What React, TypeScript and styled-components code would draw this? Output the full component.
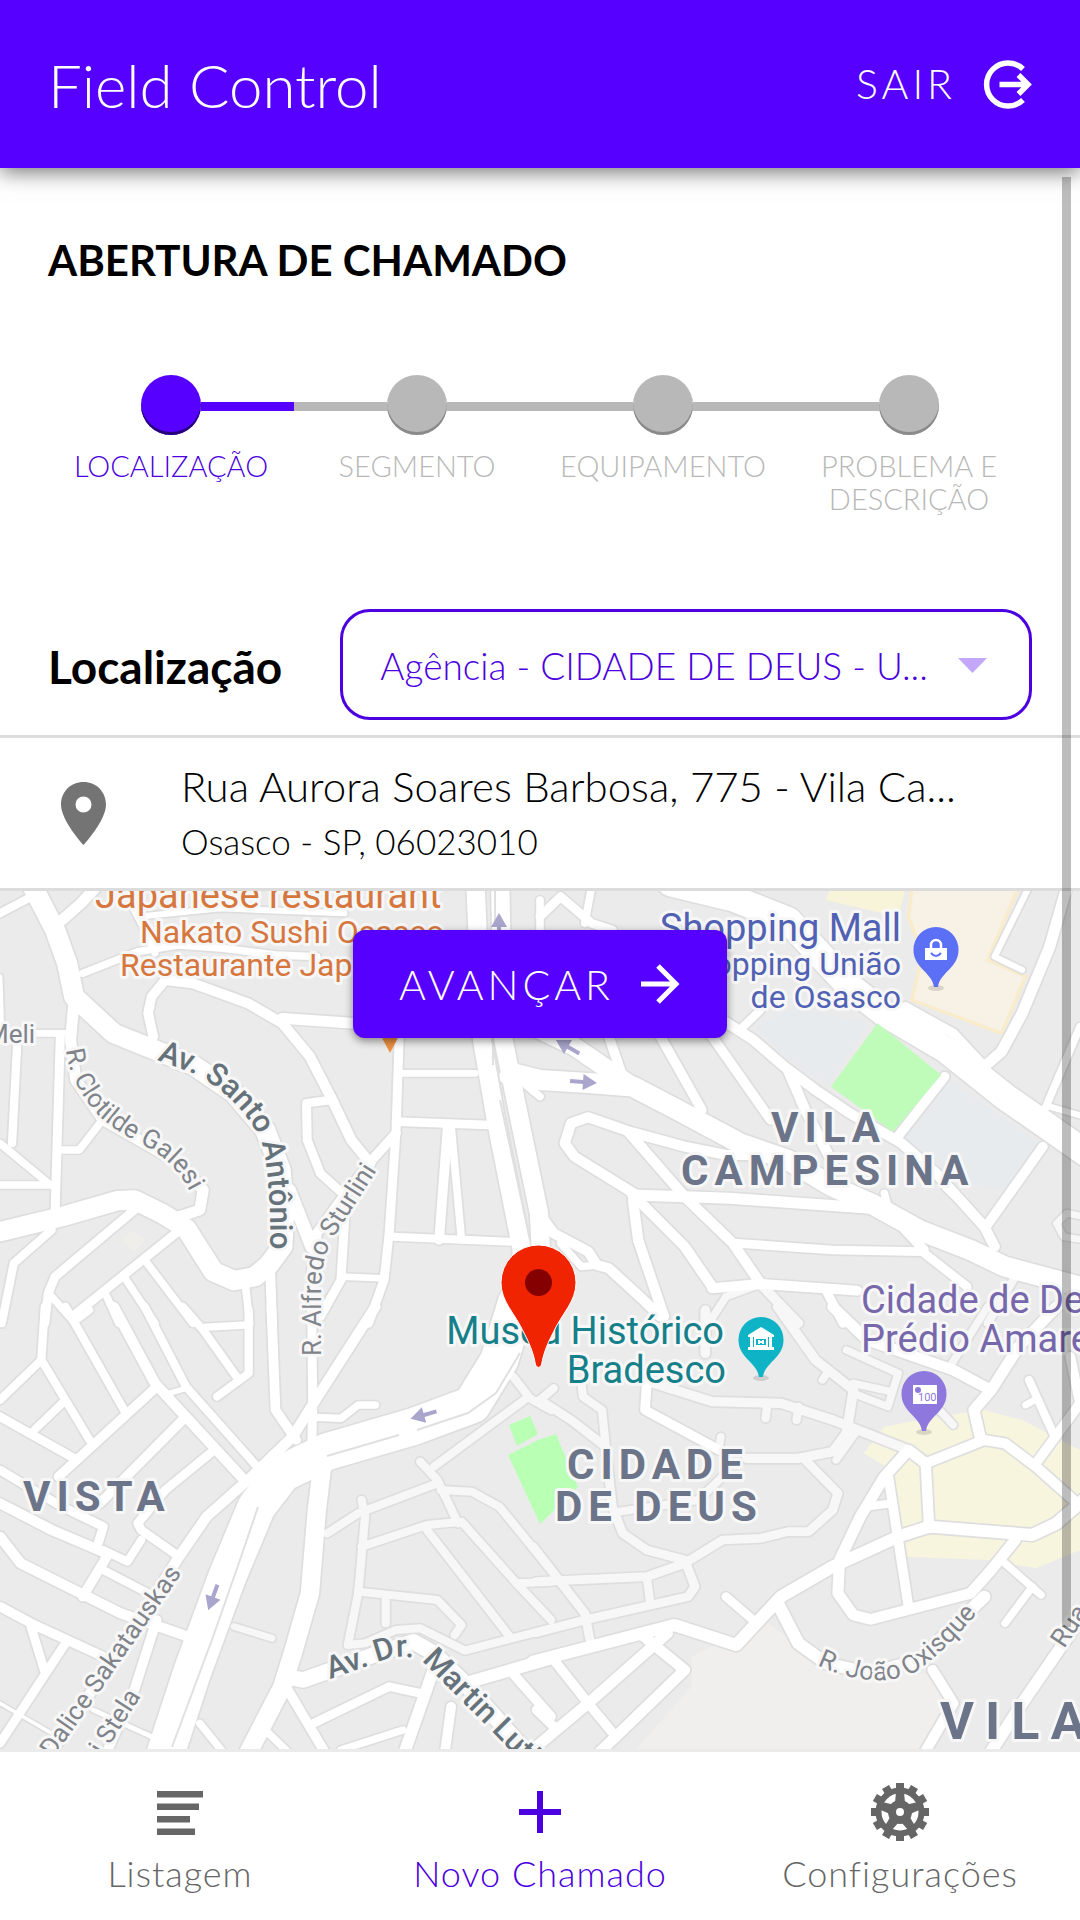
import React from "react";
import styled, { createGlobalStyle } from "styled-components";

const color = {
  primary: "#5600ff",
  primaryDark: "#4b00e0",
  idle: "#b8b8b8",
  grey: "#666666",
  line: "#dcdcdc",
};

const GlobalStyle = createGlobalStyle`
  *, *::before, *::after { box-sizing: border-box; }
  html, body { margin: 0; padding: 0; }
  body { background: #fff; color: #000; font-family: Lato, "Liberation Sans", sans-serif; font-weight: 300; }
`;

const Screen = styled.div`
  display: flex;
  flex-direction: column;
  min-height: 100vh;
  position: relative;
`;

const Header = styled.header`
  display: flex;
  align-items: center;
  justify-content: space-between;
  height: 168px;
  padding: 0 48px;
  background: ${color.primary};
  color: #fff;
  box-shadow: 0 4px 20px rgba(0, 0, 0, 0.55);
  z-index: 2;
`;

const AppTitle = styled.h1`
  margin: 0;
  padding-top: 2px;
  font-size: 60px;
  line-height: 72px;
  font-weight: 300;
`;

const LogoutButton = styled.button`
  display: flex;
  align-items: center;
  gap: 27px;
  padding: 0;
  border: 0;
  background: none;
  color: inherit;
  font: inherit;
  font-size: 41px;
  line-height: 48px;
  letter-spacing: 4px;
`;

const Form = styled.main`
  display: flex;
  flex-direction: column;
  flex: 1;
`;

const PageTitle = styled.h2`
  margin: 0;
  padding: 66px 48px 0;
  font-size: 42px;
  line-height: 52px;
  font-weight: 700;
`;

const Stepper = styled.ol`
  display: grid;
  grid-template-columns: repeat(4, minmax(0, 1fr));
  height: 234px;
  margin: 89px 48px 0;
  padding: 0;
  list-style: none;
`;

const Step = styled.li`
  display: flex;
  flex-direction: column;
  gap: 14px;
`;

const Track = styled.div`
  display: flex;
  align-items: center;
`;

const Bar = styled.span<{ $tone: string }>`
  flex: 1;
  height: 9px;
  margin-top: 3px;
  background: ${(p) => p.$tone};
`;

const Dot = styled.span<{ $active: boolean }>`
  width: 60px;
  height: 60px;
  border-radius: 50%;
  background: ${(p) => (p.$active ? color.primary : color.idle)};
  box-shadow: inset 0 -3px 0 ${(p) => (p.$active ? "#25007a" : "#8a8a8a")};
`;

const StepLabel = styled.span<{ $active: boolean }>`
  color: ${(p) => (p.$active ? color.primaryDark : color.idle)};
  font-size: 29px;
  line-height: 33px;
  text-align: center;
  white-space: pre-line;
`;

const LocationRow = styled.div`
  display: flex;
  align-items: center;
  gap: 58px;
  padding: 0 48px 15px;
  border-bottom: 3px solid ${color.line};
`;

const LocationLabel = styled.label`
  padding-top: 4px;
  font-size: 46px;
  line-height: 54px;
  font-weight: 700;
`;

const SelectBox = styled.div`
  display: flex;
  flex: 1;
  align-items: center;
  height: 111px;
  padding: 2px 42px 0 37px;
  border: 3px solid ${color.primaryDark};
  border-radius: 30px;
`;

const Select = styled.select`
  flex: 1;
  min-width: 0;
  padding: 0;
  border: 0;
  outline: 0;
  appearance: none;
  background: none;
  color: ${color.primaryDark};
  font: inherit;
  font-size: 37px;
  line-height: 48px;
  text-overflow: ellipsis;
`;

const Address = styled.address`
  display: flex;
  align-items: center;
  gap: 74px;
  height: 153px;
  padding: 0 60px;
  border-bottom: 3px solid ${color.line};
  font-style: normal;
`;

const AddressText = styled.div`
  display: flex;
  flex-direction: column;
  gap: 6px;
  min-width: 0;
  padding-bottom: 4px;
`;

const Street = styled.span`
  font-size: 42px;
  line-height: 54px;
`;

const City = styled.span`
  font-size: 35px;
  line-height: 44px;
`;

const MapArea = styled.section`
  display: grid;
  flex: 1;
  min-height: 600px;
  justify-items: center;
  align-items: start;
  position: relative;
  overflow: hidden;
  background: #ebebeb;
  border-bottom: 3px solid #ebebeb;
`;

const MapCanvas = styled.svg`
  position: absolute;
  width: 100%;
  height: 100%;
  font-family: Roboto, "Liberation Sans", sans-serif;
  font-weight: 400;
`;

const NextButton = styled.button`
  display: flex;
  align-items: center;
  gap: 27px;
  height: 108px;
  margin-top: 39px;
  padding: 0 46px;
  border: 0;
  border-radius: 12px;
  background: ${color.primary};
  color: #fff;
  font: inherit;
  font-size: 41px;
  letter-spacing: 4px;
  box-shadow: 0 3px 8px rgba(0, 0, 0, 0.45);
  z-index: 1;
`;

const TabBar = styled.nav`
  display: grid;
  grid-template-columns: repeat(3, 1fr);
  height: 168px;
  background: #fff;
`;

const Tab = styled.a<{ $active?: boolean }>`
  display: flex;
  flex-direction: column;
  align-items: center;
  gap: 9px;
  padding-top: 30px;
  color: ${(p) => (p.$active ? color.primaryDark : color.grey)};
  font-size: 36px;
  line-height: 44px;
  text-decoration: none;
  letter-spacing: 1px;
`;

const ScrollThumb = styled.div`
  position: absolute;
  top: 177px;
  right: 9px;
  bottom: 293px;
  width: 9px;
  background: rgba(0, 0, 0, 0.26);
  z-index: 3;
`;

/* ---------- icons ---------- */

const LogoutIcon = () => (
  <svg width="49" height="49" viewBox="0 0 49 49" fill="none" stroke="#fff" strokeWidth="5.500" aria-hidden="true">
    <path d="M40 9A21.500 21.500 0 1 0 40 40" />
    <path d="M16.500 24.500H44M35.500 15L45 24.500L35.500 34" />
  </svg>
);

const ArrowIcon = () => (
  <svg width="40" height="40" viewBox="0 0 40 40" fill="none" stroke="#fff" strokeWidth="5" aria-hidden="true">
    <path d="M0 20H35M17 2L35 20L17 38" />
  </svg>
);

const PlaceIcon = () => (
  <svg width="47" height="63" viewBox="0 0 47 63" aria-hidden="true">
    <path
      fill="#747474"
      fillRule="evenodd"
      d="M23.500 0C10.500 0 1 10 1 22.500C1 39 23.500 63 23.500 63S46 39 46 22.500C46 10 36.500 0 23.500 0ZM23.500 14.500A8 8 0 1 1 23.500 30.500A8 8 0 1 1 23.500 14.500Z"
    />
  </svg>
);

const ListIcon = () => (
  <svg width="60" height="60" viewBox="0 0 60 60" fill={color.grey} aria-hidden="true">
    <path d="M7 9H53V15.500H7ZM7 21.500H49V28H7ZM7 34H40V40.500H7ZM7 46.500H45V53H7Z" />
  </svg>
);

const PlusIcon = () => (
  <svg width="60" height="60" viewBox="0 0 60 60" fill={color.primaryDark} aria-hidden="true">
    <path d="M27 9H33V27H51V33H33V51H27V33H9V27H27Z" />
  </svg>
);

const CogIcon = () => (
  <svg width="60" height="60" viewBox="-30 -30 60 60" aria-hidden="true">
    <circle r="21.500" fill="none" stroke={color.grey} strokeWidth="6" />
    <circle r="8" fill="none" stroke={color.grey} strokeWidth="8" />
    {Array.from({ length: 12 }, (_, i) => (
      <rect key={i} x="-4" y="-29" width="8" height="8" fill={color.grey} transform={`rotate(${i * 30})`} />
    ))}
    {Array.from({ length: 5 }, (_, i) => (
      <path key={i} d="M-5 -9L-4 -20H4L5 -9Z" fill={color.grey} transform={`rotate(${i * 72})`} />
    ))}
  </svg>
);

/* ---------- map data ---------- */

type Road = [width: number, points: string, minor?: boolean];
type Tile = { at: string; roads: Road[] };

const tiles: Tile[] = [
  {
    at: "translate(0 880) scale(0.3444 0.3333)",
    roads: [
      [60, "85,0 160,150 195,250 215,350 330,460 450,510 560,555 680,640 770,750 815,870 825,1000 820,1100 780,1155 740,1190 680,1202 620,1175 540,1045 470,1000 390,960 340,962 180,1010 0,1055"],
      [40, "840,930 890,1060 905,1100"],
      [26, "0,100 95,48"],
      [34, "180,120 235,70 280,20"],
      [24, "240,280 400,215 520,195 650,205 800,225 920,230"],
      [22, "390,90 420,150 450,220"],
      [20, "400,110 640,85 1000,100"],
      [30, "480,300 440,350 430,400 445,470"],
      [32, "480,300 560,310 720,370 820,430 900,530 960,650 1020,780 1075,850"],
      [34, "820,415 1030,430 1160,430"],
      [28, "960,660 890,670 892,780 930,880 1000,945"],
      [30, "1150,760 1080,840 990,960 920,1060 905,1180 905,1330"],
      [28, "1160,440 1150,750 1130,1060 1115,1200 1070,1330"],
      [28, "1005,950 990,1200 930,1310"],
      [22, "990,1190 1110,1195"],
      [22, "1160,580 1380,580"],
      [28, "1150,725 1420,735"],
      [26, "1140,1070 1480,1085"],
      [30, "1300,740 1275,1080"],
      [24, "1310,740 1340,1080"],
      [46, "1470,590 1568,600"],
      [24, "1510,600 1568,650"],
      [55, "1380,0 1400,480 1440,720 1490,980 1515,1110 1505,1330"],
      [55, "1452,0 1462,480 1505,700 1565,1000 1570,1100"],
      [26, "50,490 35,790"],
      [22, "90,460 200,460"],
      [28, "175,470 165,820 160,1000"],
      [24, "175,810 230,810 290,730"],
      [24, "0,790 140,910"],
      [24, "0,915 150,915"],
      [16, "0,290 5,440"],
      [34, "215,360 205,480 220,600 300,720 420,790 520,850 590,930 580,990 520,1010"],
      [28, "390,990 160,1190 140,1240 130,1330"],
      [26, "150,1050 40,1150 5,1330"],
      [28, "510,1060 210,1310"],
      [24, "420,1140 560,1330"],
      [24, "360,1190 450,1330"],
      [24, "310,1250 345,1330"],
      [24, "150,1250 210,1320"],
      [24, "712,1210 725,1330"],
      [30, "785,1180 790,1330"],
    ],
  },
  {
    at: "translate(540 880) scale(0.3444 0.3333)",
    roads: [
      [62, "-80,580 0,600 150,610 270,620 400,690 580,790 720,840 850,920 960,970 1100,1050 1250,1110 1350,1160 1568,1220"],
      [56, "-60,420 100,500 270,620"],
      [80, "380,10 560,55 720,120 800,210 900,320 1000,400 1180,510 1350,650 1600,830"],
      [28, "0,110 60,50 150,130 210,150"],
      [24, "130,130 150,20"],
      [24, "0,60 0,160"],
      [26, "590,440 640,390"],
      [32, "500,400 620,480 710,560 800,630 900,700 1050,790 1150,880 1290,1040 1320,1100"],
      [32, "720,570 770,690 850,850"],
      [30, "500,470 670,720"],
      [30, "350,470 470,690"],
      [30, "200,470 240,590"],
      [30, "1035,775 1175,590"],
      [30, "1295,1040 1460,800"],
      [24, "1465,690 1568,440"],
      [34, "1290,560 1340,515 1400,400 1480,200 1530,20"],
      [30, "1060,380 1200,460 1290,560"],
      [20, "1420,20 1320,230 1400,270"],
      [32, "280,945 100,830 72,790 90,730 140,712 260,755 420,800 540,825 620,825"],
      [32, "260,760 420,950 560,1090 640,1210"],
      [35, "270,945 550,955 960,985"],
      [32, "270,960 285,1080 360,1310"],
      [32, "280,955 420,1100 500,1220"],
      [28, "570,1090 850,1110 1110,1115 1240,1220"],
      [32, "500,1225 640,1212 920,1232"],
      [24, "640,1212 540,1250 490,1330", true],
      [30, "640,1212 750,1330", true],
      [28, "830,1230 880,1330"],
      [30, "1060,1050 1115,1110"],
      [24, "1000,940 1010,980"],
      [32, "-10,990 40,1060 140,1115 165,1155 200,1165 300,1260 350,1310"],
      [24, "60,1090 120,1160 170,1155"],
      [26, "1380,1190 1300,1330", true],
      [22, "1580,1080 1520,1070 1500,1030 1530,1000 1580,1010", true],
      [20, "1480,680 1580,710"],
      [30, "1180,920 1220,960"],
    ],
  },
  {
    at: "translate(0 1310) scale(0.3444 0.3333)",
    roads: [
      [112, "1500,-20 1450,150 1370,285 1200,350 950,425 820,490 745,590 660,800 560,1080 465,1380"],
      [55, "940,430 920,600 900,850 850,1030 820,1130 700,1370"],
      [48, "830,1100 880,1110 1100,1030 1200,995 1260,1030 1350,1120 1540,1340"],
      [28, "905,0 908,290 905,420"],
      [32, "1090,-10 910,280 850,380 720,510 600,620 520,740 440,870 300,1090 140,1340"],
      [30, "455,930 390,1140 300,1350"],
      [30, "788,-10 800,300 860,390"],
      [26, "722,0 722,190 630,260"],
      [24, "590,52 715,45"],
      [26, "530,-10 590,60 690,205"],
      [26, "420,-10 540,230 755,480"],
      [32, "330,-10 450,220 700,500"],
      [18, "490,250 540,235"],
      [26, "190,-10 360,300"],
      [24, "215,35 260,0"],
      [26, "130,-10 120,150 260,390"],
      [26, "120,150 0,270"],
      [30, "450,235 170,500"],
      [26, "180,280 100,360"],
      [28, "0,320 215,445"],
      [30, "530,330 290,580"],
      [28, "610,430 480,540 400,640 410,660 520,740"],
      [26, "410,690 370,755 300,720"],
      [28, "0,480 80,530 180,590 300,650 285,700"],
      [32, "0,580 150,660 310,730"],
      [30, "310,740 240,860"],
      [26, "300,780 430,850"],
      [32, "0,680 60,760 350,910 560,985"],
      [30, "0,890 100,945 300,1040"],
      [28, "90,950 130,1085"],
      [28, "190,1000 120,1110 0,1300"],
      [12, "0,1180 150,1270"],
      [16, "270,1200 440,1280"],
      [22, "680,950 790,985", true],
      [24, "920,322 990,325 1040,285 1090,285"],
      [26, "1490,200 1535,260 1260,470", true],
      [26, "1530,260 1600,300", true],
      [26, "1220,455 1270,510 1330,640", true],
      [26, "950,670 1040,610 1270,520", true],
      [26, "1050,570 1060,620 1040,850 1010,1005 1060,1000 1150,960 1220,955 1350,1022 1600,955", true],
      [26, "1050,710 1240,645 1340,635 1500,820 1600,930", true],
      [26, "1280,540 1370,545 1450,590 1600,780", true],
      [26, "1240,660 1480,980", true],
      [26, "1040,845 1270,870 1340,945 1320,975", true],
      [26, "1120,870 1120,940", true],
      [26, "1500,820 1600,815", true],
      [38, "1350,1120 1600,1045"],
      [30, "1480,1080 1600,1220"],
      [30, "830,1130 945,1330"],
      [28, "910,1240 1130,1130 1220,1150"],
      [36, "1255,1090 1170,1340"],
      [30, "1310,1190 1290,1340"],
      [24, "990,1320 1170,1260"],
      [24, "750,1240 840,1330"],
      [24, "580,1240 650,1330"],
    ],
  },
  {
    at: "translate(540 1310) scale(0.3444 0.3333)",
    roads: [
      [28, "0,270 90,330 190,410 210,590 240,670 310,720 420,750 450,830 430,860 130,930 -10,968", true],
      [26, "0,270 40,235", true],
      [26, "120,220 125,260 180,300 190,400", true],
      [28, "-10,815 310,800 420,760 530,690 640,685 720,665 780,665 850,600 865,550 770,450", true],
      [26, "310,800 320,880", true],
      [28, "-20,710 130,910 145,990", true],
      [26, "230,605 460,570 530,500", true],
      [30, "600,445 750,445 850,425 890,370 910,240 800,150 690,-10", true],
      [30, "480,0 480,130", true],
      [30, "310,220 305,300 520,420"],
      [30, "330,220 500,275 700,280 850,330 1070,420", true],
      [26, "660,285 655,325", true],
      [26, "750,290 745,330", true],
      [24, "525,380 520,410", true],
      [24, "820,210 840,180", true],
      [24, "915,370 860,450", true],
      [24, "890,120 1040,190 1010,290 910,250", true],
      [24, "910,220 1020,245", true],
      [24, "1150,290 1200,345", true],
      [38, "-20,1055 390,945 570,1005 700,860 850,770 1040,680 1130,650 1430,675 1500,640 1600,550"],
      [32, "1130,655 1120,460 1290,390 1350,400 1440,470 1560,580"],
      [34, "1120,460 1070,420 1000,500 930,620 870,750 865,850 910,915 960,928 1250,850 1310,780 1380,690"],
      [30, "1010,490 1070,890"],
      [26, "950,590 1020,580"],
      [34, "1280,390 1260,300 1310,240 1390,110 1500,-10"],
      [34, "850,-10 950,90 1200,180 1300,235"],
      [24, "1190,170 1300,-10", true],
      [30, "1440,460 1568,280 1540,140"],
      [26, "1490,370 1420,210"],
      [22, "1410,285 1445,265"],
      [24, "1350,760 1455,855"],
      [24, "1430,830 1350,940"],
      [28, "540,860 630,940"],
      [38, "690,880 750,1000 830,1060 960,1090 1100,1050 1290,860"],
      [32, "1140,1080 1200,1180 1110,1340"],
      [36, "1600,880 1400,1180 1300,1340"],
      [30, "40,1050 140,1180 220,1280"],
      [34, "370,970 140,1180 -10,1310"],
      [34, "290,970 420,1080 170,1330"],
      [30, "-10,1200 50,1260"],
    ],
  },
];

const medians = [
  "M492 1040L502 1095M500 1100L530 1240",
  "M520 1353L496 1393L468 1413L417 1430",
  "M399 1435L327 1456",
  "M258 1507L241 1557L213 1637L172 1747",
  "M495 891V925M493 1040V1065",
];

const arrows: [number, number, number][] = [
  [499, 927, -90],
  [568, 1047, -150],
  [583, 1082, 4],
  [424, 1415, 164],
  [213, 1597, 110],
];

type PoiProps = { x: number; y: number; fill: string; children?: React.ReactNode };

const Poi = ({ x, y, fill, children }: PoiProps) => (
  <g transform={`translate(${x} ${y})`}>
    <ellipse cy="38" rx="8" ry="3" fill="#000" opacity="0.12" />
    <path fill={fill} d="M0 -23A22.500 22.500 0 0 0 -22.500 0C-22.500 18 -4 22 -2 37H2C4 22 22.500 18 22.500 0A22.500 22.500 0 0 0 0 -23Z" />
    {children}
  </g>
);

const Roads = () => (
  <>
    {[true, false].map((casing) => (
      <g key={String(casing)} fill="none" strokeLinejoin="round" strokeLinecap="round">
        {tiles.map((tile) => (
          <g key={tile.at} transform={tile.at}>
            {[...tile.roads]
              .sort((a, b) => Number(!!b[2]) - Number(!!a[2]))
              .map(([width, points, minor]) => (
                <polyline
                  key={points}
                  points={points}
                  strokeWidth={casing ? width + 8 : width - 2}
                  stroke={casing ? "#dedede" : minor ? "#f7f7f7" : "#fff"}
                />
              ))}
          </g>
        ))}
      </g>
    ))}
    <path d={medians.join("")} fill="none" stroke="#e0e0e0" strokeWidth="2" />
  </>
);

const Areas = () => (
  <>
    <g transform={tiles[1].at}>
      <path fill="#e8ebee" d="M1190 600L1450 790L1350 930L1180 900L1050 780ZM740 380L960 430L840 610L760 570L620 440Z" />
      <path fill="#f8f4d9" d="M840 33H1060L1040 110L830 60Z" />
      <path fill="#f7f1e6" stroke="#f8eccb" strokeWidth="10" d="M1080 20H1390L1300 240L1410 290L1340 460L1080 360L1110 220L1070 110Z" />
    </g>
    <g transform={tiles[3].at}>
      <path fill="#f8f5df" d="M940 430L1000 350L1150 320L1290 300L1400 330L1568 420V720L1440 775L1300 750L1060 740L1020 480Z" />
      <path fill="#f0efed" d="M650 930L850 1080L1140 1090L1200 1180L1120 1340H260L440 1130V1040Z" />
    </g>
    <path fill="#f0eeea" d="M122 1240L133 1230L145 1240L134 1252Z" />
  </>
);

const Parks = () => (
  <>
    <path fill="#bffcb9" transform={tiles[1].at} d="M980 430L1165 585L1025 755L845 620Z" />
    <path fill="#b9ffb4" d="M509 1425L530 1416L538 1434L517 1446ZM508 1455L538 1440L556 1434L578 1487L540 1524Z" />
  </>
);

const MapLabels = () => (
  <g stroke="#f7f7f7" strokeWidth="6" strokeLinejoin="round" paintOrder="stroke">
    <g fill="#d6773f">
      <text x="95" y="908" fontSize="38">Japanese restaurant</text>
      <g fontSize="32">
        <text x="140" y="943">Nakato Sushi Osasco</text>
        <text x="120" y="976">Restaurante Japonês</text>
      </g>
    </g>
    <g fill="#5161b3" textAnchor="end">
      <text x="901" y="941" fontSize="38">Shopping Mall</text>
      <g fontSize="32">
        <text x="901" y="975">Shopping União</text>
        <text x="901" y="1008">de Osasco</text>
      </g>
    </g>
    <g fill="#15808a" textAnchor="end" fontSize="38">
      <text x="724" y="1344">Museu Histórico</text>
      <text x="726" y="1383">Bradesco</text>
    </g>
    <g fill="#7668ab" fontSize="38">
      <text x="861" y="1313">Cidade de Deus</text>
      <text x="861" y="1352">Prédio Amarelo</text>
    </g>
    <g fill="#6b7488" fontWeight="700" fontSize="42" letterSpacing="6">
      <text x="771" y="1142">VILA</text>
      <text x="681" y="1185">CAMPESINA</text>
      <text x="23" y="1511">VISTA</text>
      <text x="567" y="1479">CIDADE</text>
      <text x="555" y="1521">DE DEUS</text>
      <text x="940" y="1739" fontSize="52" letterSpacing="11">VILA</text>
    </g>
    <g fill="#80848a" fontSize="26">
      <text x="-14" y="1043">Meli</text>
      <text><textPath href="#clotilde">R. Clotilde Galesi</textPath></text>
      <text><textPath href="#alfredo">R. Alfredo Sturlini</textPath></text>
      <text textAnchor="end"><textPath href="#sakatauskas" startOffset="100%">Dalice Sakatauskas</textPath></text>
      <text textAnchor="end"><textPath href="#stela" startOffset="100%">i Stela</textPath></text>
      <text><textPath href="#joao">R. João Oxisque</textPath></text>
      <text><textPath href="#rua">Rua</textPath></text>
    </g>
    <g fill="#66727a" fontSize="31" fontWeight="500">
      <text><textPath href="#antonio">Av. Santo Antônio</textPath></text>
      <text><textPath href="#martin">Av. Dr. Martin Luther</textPath></text>
    </g>
  </g>
);

const StreetMap = () => (
  <MapCanvas viewBox="0 891 1080 858" preserveAspectRatio="xMidYMin slice" role="img" aria-label="Mapa">
    <defs>
      <path id="clotilde" d="M66 1050Q70 1085 100 1117Q118 1133 145 1146Q182 1165 198 1210" />
      <path id="antonio" d="M157 1060L198 1075Q240 1100 260 1138Q274 1180 269 1290" />
      <path id="alfredo" d="M321 1356L321 1290Q321 1255 336 1234L396 1141" />
      <path id="sakatauskas" d="M27 1796L182 1573" />
      <path id="stela" d="M78 1795L141 1696" />
      <path id="martin" d="M330 1679L374 1664Q408 1648 428 1667L520 1760L600 1840" />
      <path id="joao" d="M817 1665Q870 1690 912 1674Q950 1650 995 1590" />
      <path id="rua" d="M1064 1649L1110 1580" />
    </defs>
    <Areas />
    <Roads />
    <Parks />
    {arrows.map(([x, y, turn]) => (
      <path key={x} fill="#aaa5cc" transform={`translate(${x} ${y}) rotate(${turn})`} d="M-13 -2H0V-8L14 0L0 8V2H-13Z" />
    ))}
    <MapLabels />
    <path fill="#ef9142" d="M380 1034H400L390 1053Z" />
    <Poi x={936} y={950} fill="#5c70f5">
      <path d="M-11 -2H11V10H-11Z" fill="#fff" />
      <path d="M-5 -2V-5A5 5 0 0 1 5 -5V-2" fill="none" stroke="#fff" strokeWidth="2.500" />
      <path d="M-5 3Q0 9 5 3" fill="none" stroke="#5c70f5" strokeWidth="2" />
    </Poi>
    <Poi x={761} y={1340} fill="#0fb3c6">
      <path d="M-13 -5L0 -13L13 -5V-3H-13ZM-11 -3H-8V7H-11ZM8 -3H11V7H8ZM-13 7H13V10H-13Z" fill="#fff" />
      <path d="M-6 -2H6V6H-6ZM-2 0V4M2 0V4M-2 2H2" fill="none" stroke="#fff" strokeWidth="2" />
    </Poi>
    <Poi x={924} y={1394} fill="#8f78dd">
      <path d="M-11 -9H13V10H-11Z" fill="#fff" />
      <circle cx="-6" cy="-4" r="3" fill="#8f78dd" />
      <text x="-6" y="7" fontSize="11" fill="#8f78dd">100</text>
    </Poi>
    <path
      fill="#f02400"
      stroke="#fff"
      strokeWidth="1"
      d="M538.500 1245A37.500 37.500 0 0 0 501 1282.500C501 1302 515 1313 524 1333C531 1346 534 1356 535.500 1365Q538.500 1370 541.500 1365C543 1356 546 1346 553 1333C562 1313 576 1302 576 1282.500A37.500 37.500 0 0 0 538.500 1245Z"
    />
    <circle cx="538.500" cy="1282.500" r="13.500" fill="#850000" />
  </MapCanvas>
);

/* ---------- screen ---------- */

const steps = ["LOCALIZAÇÃO", "SEGMENTO", "EQUIPAMENTO", "PROBLEMA E\nDESCRIÇÃO"];

const Progress = ({ current }: { current: number }) => {
  const tone = (active: boolean, hidden: boolean) => (hidden ? "transparent" : active ? color.primary : color.idle);
  return (
    <Stepper>
      {steps.map((label, i) => (
        <Step key={label} aria-current={i === current ? "step" : undefined}>
          <Track>
            <Bar $tone={tone(i > 0 && i <= current, i === 0)} />
            <Dot $active={i <= current} />
            <Bar $tone={tone(i <= current, i === steps.length - 1)} />
          </Track>
          <StepLabel $active={i <= current}>{label}</StepLabel>
        </Step>
      ))}
    </Stepper>
  );
};

export default function App() {
  return (
    <Screen>
      <GlobalStyle />
      <Header>
        <AppTitle>Field Control</AppTitle>
        <LogoutButton type="button">
          SAIR
          <LogoutIcon />
        </LogoutButton>
      </Header>
      <Form>
        <PageTitle>ABERTURA DE CHAMADO</PageTitle>
        <Progress current={0} />
        <LocationRow>
          <LocationLabel htmlFor="location">Localização</LocationLabel>
          <SelectBox>
            <Select id="location">
              <option>Agência - CIDADE DE DEUS - U...</option>
            </Select>
            <svg width="29" height="15" viewBox="0 0 29 15" aria-hidden="true">
              <path d="M0 0H29L14.500 15Z" fill="#c3a8fa" />
            </svg>
          </SelectBox>
        </LocationRow>
        <Address>
          <PlaceIcon />
          <AddressText>
            <Street>Rua Aurora Soares Barbosa, 775 - Vila Ca...</Street>
            <City>Osasco - SP, 06023010</City>
          </AddressText>
        </Address>
        <MapArea>
          <StreetMap />
          <NextButton type="button">
            AVANÇAR
            <ArrowIcon />
          </NextButton>
        </MapArea>
      </Form>
      <TabBar>
        <Tab href="#listagem">
          <ListIcon />
          Listagem
        </Tab>
        <Tab href="#novo" $active aria-current="page">
          <PlusIcon />
          Novo Chamado
        </Tab>
        <Tab href="#configuracoes">
          <CogIcon />
          Configurações
        </Tab>
      </TabBar>
      <ScrollThumb />
    </Screen>
  );
}
